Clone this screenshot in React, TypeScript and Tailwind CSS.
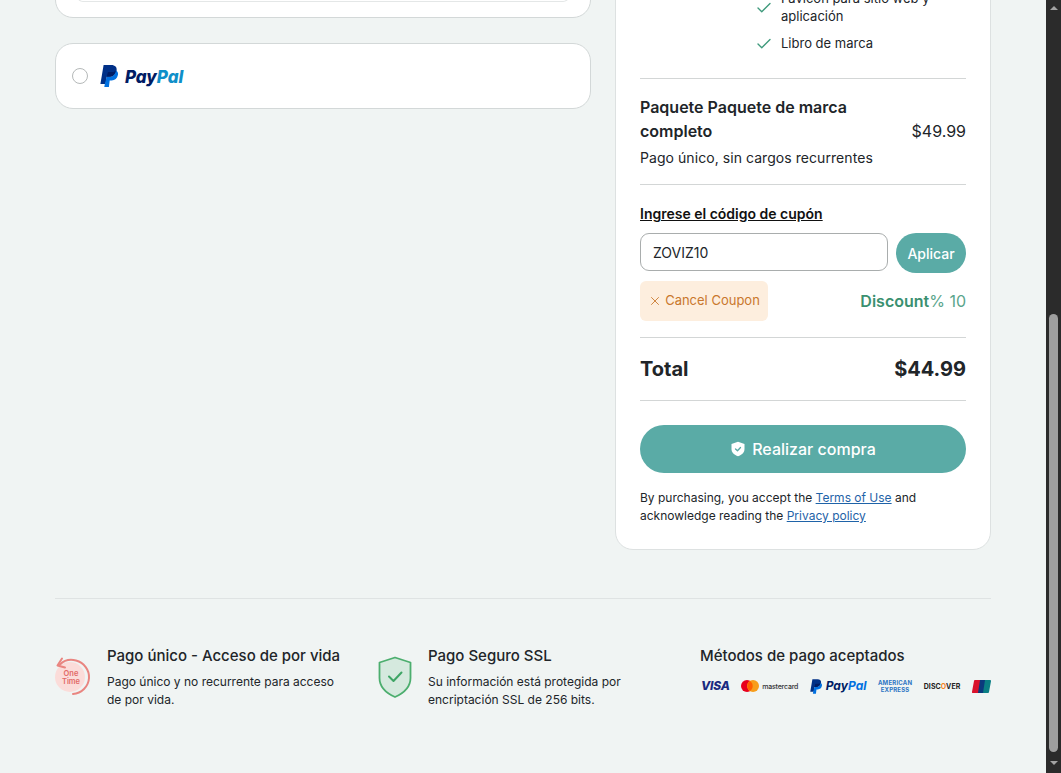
import { Check, X } from "lucide-react";

const features = ["Favicon para sitio web y aplicación", "Libro de marca"];

function PayPalMark({ className }: { className?: string }) {
  return (
    <svg viewBox="0 0 18 22" className={className}>
      <path d="M3.6 0h7.6c3.9 0 6 2.2 5.4 5.6-.7 4-3.5 6.2-7.4 6.2H6.8L5.6 19H.4z" fill="#003087" />
      <path d="M15.9 5.2c1.7 1 2.4 2.6 2 4.8-.6 3.4-3 5.4-6.3 5.4H9.7L8.9 22H4.3l.6-3.6 1.9-6.6h2.4c3.9 0 6.3-2.6 6.7-6.6z" fill="#0070e0" />
      <path d="M15.7 5.4c-.5 3.9-3 6.4-6.5 6.4H6.8l-1.1 5.7 1.9-9.6c.1-.6.6-1 1.2-1h4.4c.9 0 1.8-.6 2.5-1.5z" fill="#001c64" />
    </svg>
  );
}

function OneTimeIcon() {
  return (
    <svg viewBox="0 0 37 42" className="w-[37px] h-[42px] shrink-0 mt-[10px] -ml-[1px]">
      <circle cx="16" cy="21" r="15" fill="#fbdcd9" />
      <path d="M6 8.5C10 4.5 16 3 22 4.5c8 2.200 13.500 9.500 13 17.500-.5 8.500-7.500 15.500-16 16" fill="none" stroke="#e98580" strokeWidth="2" strokeLinecap="round" />
      <path d="M8 2.500 3.500 9.500l7.500 2" fill="none" stroke="#e98580" strokeWidth="2" strokeLinecap="round" strokeLinejoin="round" />
      <text x="17" y="20" textAnchor="middle" fontSize="7.500" fontWeight="600" fill="#e26a66" fontFamily="Inter, sans-serif">One</text>
      <text x="17" y="28" textAnchor="middle" fontSize="7.500" fontWeight="600" fill="#e26a66" fontFamily="Inter, sans-serif">Time</text>
    </svg>
  );
}

function ShieldIcon() {
  return (
    <svg viewBox="0 0 34 42" className="w-[34px] h-[42px] shrink-0 mt-[10px]">
      <path d="M17 1.500 32.500 6.500V22c0 8.500-6.500 15-15.500 19C8 37 1.500 30.500 1.500 22V6.500z" fill="#d5e9de" stroke="#4cae6e" strokeWidth="1.800" strokeLinejoin="round" />
      <path d="M11 20.500l4.500 4.500 8-8.500" fill="none" stroke="#3ea565" strokeWidth="2" strokeLinecap="round" strokeLinejoin="round" />
    </svg>
  );
}

function ButtonShield() {
  return (
    <svg viewBox="0 0 16 16" className="w-4 h-4">
      <path d="M8 .8 14.500 3v5c0 3.500-2.700 5.800-6.500 7.200C4.200 13.800 1.500 11.500 1.500 8V3z" fill="#fff" />
      <path d="M5.500 8l2 1.800 3-3.300" fill="none" stroke="#5aaba6" strokeWidth="1.300" strokeLinecap="round" strokeLinejoin="round" />
    </svg>
  );
}

function PaymentLogos() {
  return (
    <div className="flex items-center justify-between h-[16px] mt-[12px] ml-[1px]">
      <span className="text-[12px] font-extrabold italic text-[#1a2a80] tracking-[-0.2px]">VISA</span>
      <span className="flex items-center gap-[3px]">
        <svg viewBox="0 0 18 12" className="w-[18px] h-[12px]">
          <circle cx="6" cy="6" r="6" fill="#e8001c" />
          <circle cx="12" cy="6" r="6" fill="#f79e1b" />
          <path d="M9 1a6 6 0 0 1 0 10 6 6 0 0 1 0-10z" fill="#ff5f00" />
        </svg>
        <span className="text-[7px] font-medium text-[#333] leading-none tracking-[-0.2px]">mastercard</span>
      </span>
      <span className="flex items-center gap-[4px]">
        <PayPalMark className="w-[12px] h-[15px]" />
        <span className="text-[12px] font-bold italic leading-none">
          <span className="text-[#001c64]">Pay</span>
          <span className="text-[#0070e0]">Pal</span>
        </span>
      </span>
      <span className="text-[6px] font-bold text-[#2d74c4] leading-[7px] text-center tracking-[0.2px]">
        AMERICAN
        <br />
        EXPRESS
      </span>
      <span className="text-[7px] font-bold text-[#222] leading-none tracking-[0.1px]">
        DISC<span className="text-[#f58220]">O</span>VER
      </span>
      <svg viewBox="0 0 19 13" className="w-[19px] h-[13px]">
        <path d="M3 0h6L7 13H1a1 1 0 0 1-1-1.200L2 1a1 1 0 0 1 1-1z" fill="#d9122c" />
        <path d="M8 0h6l-2 13H6z" fill="#0b3a7d" />
        <path d="M13 0h5a1 1 0 0 1 1 1.200L17 12a1 1 0 0 1-1 1h-5z" fill="#0a7f84" />
      </svg>
    </div>
  );
}

function Scrollbar() {
  return (
    <aside className="w-[15px] shrink-0 bg-[#2b2b2b] flex flex-col items-center">
      <div className="h-[15px] flex items-center justify-center shrink-0">
        <div className="w-0 h-0 border-x-[4px] border-x-transparent border-b-[4px] border-b-[#a3a3a3]" />
      </div>
      <div className="w-[9px] h-[438px] mt-[299px] rounded-full bg-[#9f9f9f]" />
      <div className="h-[15px] mt-[3px] flex items-center justify-center shrink-0">
        <div className="w-0 h-0 border-x-[4px] border-x-transparent border-t-[4px] border-t-[#a3a3a3]" />
      </div>
    </aside>
  );
}

export default function App() {
  return (
    <div className="h-[773px] overflow-hidden flex bg-[#f0f4f3] text-[#212529]" style={{ fontFamily: "Inter, sans-serif" }}>
      <main className="flex-1 min-w-0 px-[55px]">
        <div className="-mt-[40px] grid grid-cols-[536px_376px] gap-[24px] items-start">
          {/* Payment methods */}
          <div className="flex flex-col gap-[25px]">
            <div className="h-[58px] bg-white border border-[#d3d8d8] rounded-[18px] px-[21px] flex flex-col">
              <div className="h-[41px] border-b border-x border-[#e4e7e7] rounded-b-[6px]" />
            </div>
            <div className="h-[66px] bg-white border border-[#d3d8d8] rounded-[18px] px-[16px] flex items-center gap-[12px]">
              <span className="w-[16px] h-[16px] rounded-full border border-[#b5b9b9] bg-white" />
              <PayPalMark className="w-[18px] h-[22px] -mt-[1px]" />
              <span className="text-[17px] font-extrabold italic leading-none -ml-[5px] mt-[2px] tracking-[-0.05px]">
                <span className="text-[#001c64]">Pay</span>
                <span className="text-[#0f8fc9]">Pal</span>
              </span>
            </div>
          </div>

          {/* Order summary */}
          <div className="bg-white border border-[#dde1e1] rounded-[18px] px-[24px] pb-[24px]">
            <ul className="pt-[28px] pl-[115px] pb-[26px] border-b border-[#d3d6d6] flex flex-col gap-[9px]">
              {features.map((f) => (
                <li key={f} className="flex items-center gap-[8px] text-[13px] leading-[18px]">
                  <Check className="w-[18px] h-[18px] text-[#3f9a7c] shrink-0 translate-y-[1px]" strokeWidth={1.800} />
                  <span>{f}</span>
                </li>
              ))}
            </ul>

            <div className="pt-[16px] pb-[16px] border-b border-[#d3d6d6]">
              <div className="flex items-end justify-between">
                <div className="text-[16px] leading-[24px] font-semibold w-[240px]">Paquete Paquete de marca completo</div>
                <div className="text-[16px] leading-[24px]">$49.99</div>
              </div>
              <p className="text-[14px] leading-[20px] mt-[5px] tracking-[0.06px]">Pago único, sin cargos recurrentes</p>
            </div>

            <div className="pt-[20px] pb-[16px] border-b border-[#d3d6d6]">
              <div className="text-[14px] leading-[18px] font-semibold underline text-[#111]">Ingrese el código de cupón</div>
              <div className="flex gap-[8px] mt-[10px]">
                <input
                  readOnly
                  value="ZOVIZ10"
                  className="w-[248px] h-[38px] border border-[#a9adad] rounded-[9px] px-[12px] text-[14px] text-[#212529] outline-none"
                />
                <button className="flex-1 h-[40px] rounded-full bg-[#5aaba6] text-white text-[14px] font-medium">Aplicar</button>
              </div>
              <div className="flex items-center justify-between mt-[8px]">
                <button className="h-[40px] w-[128px] rounded-[6px] bg-[#fdeede] text-[#c9772c] text-[13px] flex items-center justify-center gap-[3px]">
                  <X className="w-[14px] h-[14px]" strokeWidth={1.500} />
                  Cancel Coupon
                </button>
                <div className="text-[16px] text-[#5aa58c]">
                  <span className="font-semibold text-[#3a9070]">Discount</span>% 10
                </div>
              </div>
            </div>

            <div className="h-[63px] border-b border-[#d3d6d6] flex items-center justify-between text-[20px] font-bold">
              <span>Total</span>
              <span>$44.99</span>
            </div>

            <button className="w-full h-[48px] mt-[24px] rounded-full bg-[#5aaba6] text-white text-[16px] font-medium flex items-center justify-center gap-[6px]">
              <ButtonShield />
              Realizar compra
            </button>

            <p className="text-[12px] leading-[18px] mt-[16px]">
              By purchasing, you accept the <a className="text-[#1f63a8] underline">Terms of Use</a> and acknowledge reading the{" "}
              <a className="text-[#1f63a8] underline">Privacy policy</a>
            </p>
          </div>
        </div>

        {/* Footer */}
        <footer className="mt-[48px] pt-[47px] border-t border-[#dfe3e3] grid grid-cols-[297px_296px_1fr] gap-[26px]">
          <div className="flex gap-[16px]">
            <OneTimeIcon />
            <div>
              <h3 className="text-[15px] leading-[20px] font-[450]">Pago único - Acceso de por vida</h3>
              <p className="text-[12px] leading-[18px] mt-[7px] max-w-[232px]">Pago único y no recurrente para acceso de por vida.</p>
            </div>
          </div>
          <div className="flex gap-[16px]">
            <ShieldIcon />
            <div>
              <h3 className="text-[15px] leading-[20px] font-[450]">Pago Seguro SSL</h3>
              <p className="text-[12px] leading-[18px] mt-[7px]">Su información está protegida por encriptación SSL de 256 bits.</p>
            </div>
          </div>
          <div>
            <h3 className="text-[15px] leading-[20px] font-[450]">Métodos de pago aceptados</h3>
            <PaymentLogos />
          </div>
        </footer>
      </main>
      <Scrollbar />
    </div>
  );
}
